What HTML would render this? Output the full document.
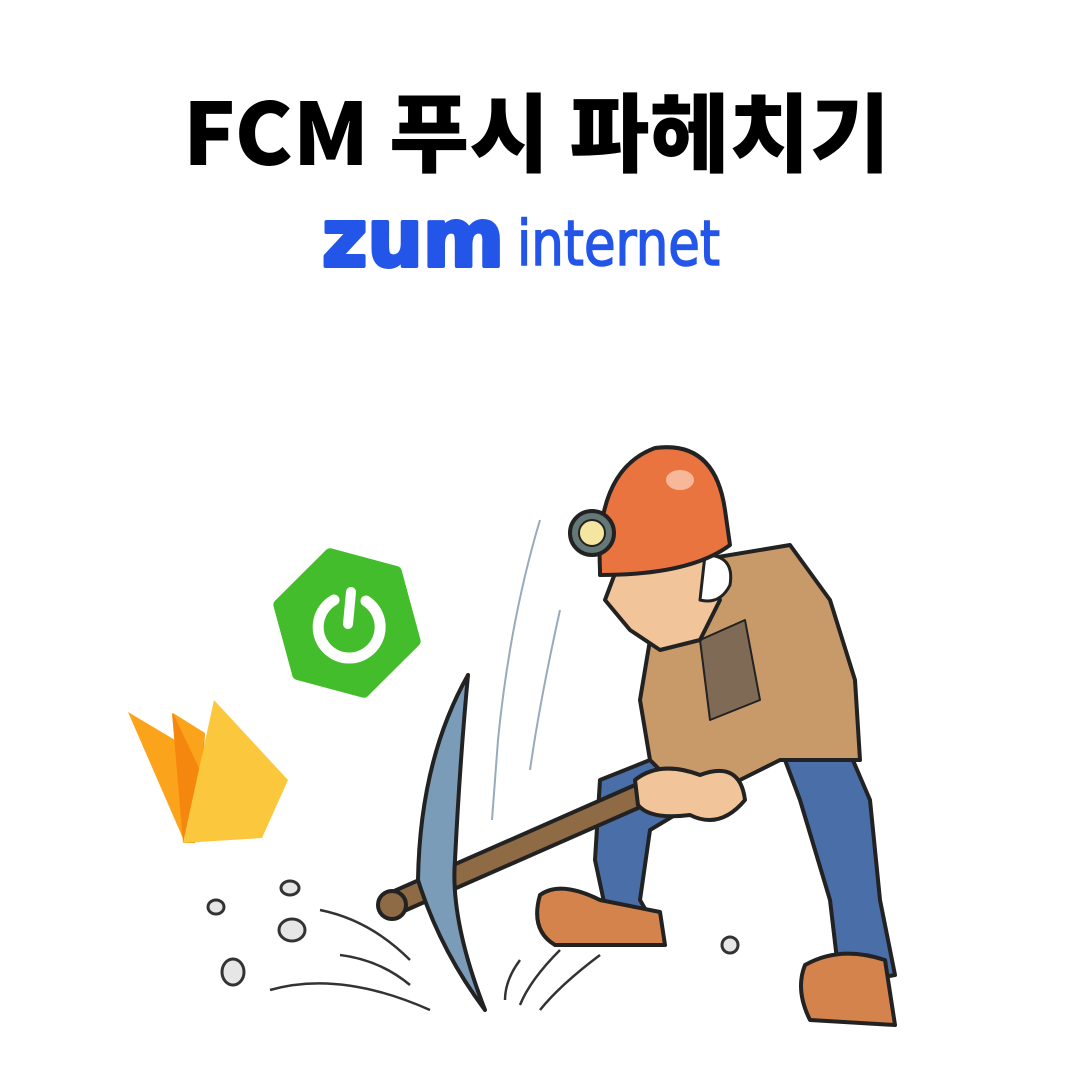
<!DOCTYPE html>
<html><head><meta charset="utf-8"><style>
html,body{margin:0;padding:0;background:#fff;width:1080px;height:1080px;overflow:hidden}
svg{display:block}
</style></head><body>
<svg width="1080" height="1080" viewBox="0 0 1080 1080" xmlns="http://www.w3.org/2000/svg">
<rect width="1080" height="1080" fill="#fff"/>
<text x="183" y="165" font-family="'Noto Sans CJK KR','Liberation Sans',sans-serif" font-weight="900" font-size="86" textLength="707" lengthAdjust="spacingAndGlyphs" fill="#000">FCM 푸시 파헤치기</text>
<text x="322" y="266" font-family="'DejaVu Sans','Liberation Sans',sans-serif" font-weight="bold" font-size="80" textLength="182" lengthAdjust="spacingAndGlyphs" fill="#2356e8" stroke="#2356e8" stroke-width="4" stroke-linejoin="round">zum</text>
<text x="517" y="265" font-family="'DejaVu Sans','Liberation Sans',sans-serif" font-size="62" textLength="203" lengthAdjust="spacingAndGlyphs" fill="#2356e8" stroke="#2356e8" stroke-width="1.6">internet</text>

<!-- Spring logo -->
<g transform="translate(347,623) rotate(15)">
<polygon points="-34,-62 34,-62 70,0 34,62 -34,62 -70,0" fill="#43bd2b" stroke="#43bd2b" stroke-width="12" stroke-linejoin="round"/>
</g>
<path d="M334,600 A31,31 0 1 0 366,601" fill="none" stroke="#fff" stroke-width="11" stroke-linecap="round"/>
<line x1="351" y1="592" x2="348" y2="624" stroke="#fff" stroke-width="10" stroke-linecap="round"/>

<!-- Firebase -->
<polygon points="128,712 175,740 185,843" fill="#fba41b"/>
<polygon points="172,713 205,735 195,843 183,843" fill="#f6870e"/>
<polygon points="173,713 205,733 200,770" fill="#fba41b"/>
<polygon points="214,700 288,780 262,838 183,843" fill="#fbc73c"/>

<!-- Miner -->
<g stroke="#222" stroke-width="4" stroke-linejoin="round" stroke-linecap="round">
<path d="M770,720 L840,730 L870,800 L880,900 L895,975 L840,985 L830,900 L800,800 Z" fill="#4a6ea8"/>
<path d="M600,780 L650,760 L720,740 L760,760 L700,800 L650,830 L640,900 L660,935 L610,930 L595,860 Z" fill="#4a6ea8"/>
<path d="M700,560 L790,545 L830,600 L855,680 L860,760 L780,760 L740,780 L680,790 L650,760 L640,700 L650,640 L670,600 Z" fill="#c89a6a"/>
<path d="M700,640 L745,620 L760,700 L710,720 Z" fill="#7f6a55" stroke-width="2"/>
<path d="M620,560 L700,545 L720,600 L700,640 L660,650 L630,630 L605,600 Z" fill="#f1c49a"/>
<path d="M705,555 Q735,555 730,585 Q720,605 700,600 Z" fill="#fff" stroke-width="3"/>
<path d="M600,570 Q595,470 655,448 Q715,440 725,510 L730,545 Q690,575 600,575 Z" fill="#ea7440"/>
<ellipse cx="680" cy="480" rx="14" ry="10" fill="#f7b89a" stroke="none"/>
<circle cx="592" cy="533" r="22" fill="#677" />
<circle cx="592" cy="533" r="13" fill="#f4e6a0" stroke-width="2"/>
<path d="M385,895 L635,785 L645,805 L395,915 Z" fill="#8e6a45"/>
<path d="M468,675 Q420,760 418,880 Q440,950 485,1010 Q450,920 455,860 Q460,760 468,675 Z" fill="#7a9cb8"/>
<circle cx="392" cy="905" r="14" fill="#8e6a45"/>
<path d="M635,780 Q660,760 700,775 Q740,760 745,800 Q720,830 690,815 Q650,820 638,805 Z" fill="#f1c49a"/>
<path d="M540,895 Q560,880 600,900 L660,912 L665,945 L555,945 Q530,930 540,895 Z" fill="#d4834c"/>
<path d="M805,965 Q840,945 885,960 L895,1025 L810,1020 Q795,990 805,965 Z" fill="#d4834c"/>
</g>
<g fill="#e6e6e6" stroke="#333" stroke-width="3">
<ellipse cx="216" cy="907" rx="8" ry="7"/>
<ellipse cx="290" cy="888" rx="9" ry="7"/>
<ellipse cx="292" cy="930" rx="13" ry="11"/>
<ellipse cx="233" cy="972" rx="11" ry="13"/>
<ellipse cx="730" cy="945" rx="8" ry="8"/>
</g>
<g fill="none" stroke="#333" stroke-width="2.5">
<path d="M320,910 Q370,920 410,960"/>
<path d="M340,955 Q380,960 410,985"/>
<path d="M270,990 Q340,970 430,1010"/>
<path d="M520,960 Q505,980 505,1000"/>
<path d="M560,950 Q530,980 520,1005"/>
<path d="M600,955 Q560,985 540,1010"/>
</g>
<g fill="none" stroke="#9ab" stroke-width="2">
<path d="M540,520 Q510,620 498,740 L492,820"/>
<path d="M560,610 Q540,700 530,770"/>
</g>
</svg>
</body></html>
